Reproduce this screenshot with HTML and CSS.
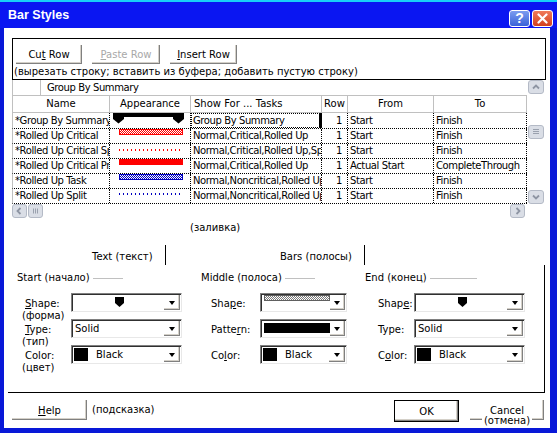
FILE: index.html
```html
<!DOCTYPE html>
<html>
<head>
<meta charset="utf-8">
<link rel="stylesheet" href="styles.css">
</head>
<body>
<div class="window">
  <div class="titlebar">
    <span class="title">Bar Styles</span>
    <span class="tbtn help">?</span>
    <span class="tbtn close"><svg width="11" height="11" viewBox="0 0 11 11"><path d="M1.5 1.5L9.5 9.5M9.5 1.5L1.5 9.5" stroke="#fff" stroke-width="2.2" stroke-linecap="round"/></svg></span>
  </div>
  <div class="client">
    <div class="grp1">
      <div class="btnrow">
        <div class="btn w66"><span>Cu<u>t</u> Row</span></div>
        <div class="btn w68 dis"><span><u>P</u>aste Row</span></div>
        <div class="btn w67"><span><u>I</u>nsert Row</span></div>
      </div>
      <div class="hint">(вырезать строку; вставить из буфера; добавить пустую строку)</div>
    </div>

    <div class="tablearea">
      <div class="grid">
        <div class="toprow"><div class="corner"></div><div class="toptext">Group By Summary</div></div>
        <div class="cols hdr">
          <div class="c">Name</div><div class="c">Appearance</div><div class="c l">Show For ... Tasks</div><div class="c">Row</div><div class="c">From</div><div class="c">To</div>
        </div>
        <div class="cols row r1">
          <div class="c">*Group By Summary</div>
          <div class="c app"><svg class="gbar" width="71" height="11" viewBox="0 0 71 11"><rect x="0" y="0" width="71" height="4"/><polygon points="0,0 11,0 11,6 5.5,10.5 0,6"/><polygon points="60,0 71,0 71,6 65.5,10.5 60,6"/></svg></div>
          <div class="c focus">Group By Summary</div>
          <div class="c num">1</div>
          <div class="c">Start</div>
          <div class="c">Finish</div>
        </div>
        <div class="cols row">
          <div class="c">*Rolled Up Critical</div>
          <div class="c app"><div class="bar hatch-red"></div></div>
          <div class="c">Normal,Critical,Rolled Up</div>
          <div class="c num">1</div>
          <div class="c">Start</div>
          <div class="c">Finish</div>
        </div>
        <div class="cols row">
          <div class="c">*Rolled Up Critical Split</div>
          <div class="c app"><div class="bar dots-red"></div></div>
          <div class="c">Normal,Critical,Rolled Up,Split</div>
          <div class="c num">1</div>
          <div class="c">Start</div>
          <div class="c">Finish</div>
        </div>
        <div class="cols row">
          <div class="c">*Rolled Up Critical Progress</div>
          <div class="c app"><div class="bar solid-red"></div></div>
          <div class="c">Normal,Critical,Rolled Up</div>
          <div class="c num">1</div>
          <div class="c">Actual Start</div>
          <div class="c">CompleteThrough</div>
        </div>
        <div class="cols row">
          <div class="c">*Rolled Up Task</div>
          <div class="c app"><div class="bar hatch-blue"></div></div>
          <div class="c">Normal,Noncritical,Rolled Up</div>
          <div class="c num">1</div>
          <div class="c">Start</div>
          <div class="c">Finish</div>
        </div>
        <div class="cols row">
          <div class="c">*Rolled Up Split</div>
          <div class="c app"><div class="bar dots-blue"></div></div>
          <div class="c">Normal,Noncritical,Rolled Up,Split</div>
          <div class="c num">1</div>
          <div class="c">Start</div>
          <div class="c">Finish</div>
        </div>
        <div class="hscroll">
          <svg class="sb" width="15" height="14" viewBox="0 0 15 14"><rect x=".5" y=".5" width="14" height="13" rx="2.5" class="sbbg"/><path d="M8.5 4L5.5 7L8.5 10" class="chev"/></svg>
          <svg class="sb hthumb" width="15" height="14" viewBox="0 0 15 14"><rect x=".5" y=".5" width="14" height="13" rx="2.5" class="sbbg"/><path d="M5.5 4.5v5M7.5 4.5v5M9.5 4.5v5" class="grip"/></svg>
          <div class="spacer"></div>
          <svg class="sb hright" width="15" height="14" viewBox="0 0 15 14"><rect x=".5" y=".5" width="14" height="13" rx="2.5" class="sbbg"/><path d="M6.5 4L9.5 7L6.5 10" class="chev"/></svg>
        </div>
      </div>
      <div class="vscroll">
        <svg class="sb" width="16" height="14" viewBox="0 0 16 14"><rect x=".5" y=".5" width="15" height="13" rx="2.5" class="sbbg"/><path d="M5 8.5L8 5.5L11 8.5" class="chev"/></svg>
        <svg class="sb vthumb" width="16" height="14" viewBox="0 0 16 14"><rect x=".5" y=".5" width="15" height="13" rx="2.5" class="sbbg"/><path d="M5 4.5h6M5 6.5h6M5 8.5h6" class="grip"/></svg>
        <svg class="sb vdown" width="16" height="14" viewBox="0 0 16 14"><rect x=".5" y=".5" width="15" height="13" rx="2.5" class="sbbg"/><path d="M5 5.5L8 8.5L11 5.5" class="chev"/></svg>
      </div>
    </div>

    <div class="fill">(заливка)</div>

    <div class="tabs">
      <div class="tab t1">Text (текст)</div>
      <div class="tab t2">Bars (полосы)</div>
    </div>

    <div class="panel">
      <div class="grp gs">
        <div class="ghead"><span>Start (начало)</span><i class="rule w30"></i></div>
        <div class="frow first">
          <div class="lbl"><span><u>S</u>hape:</span><span class="sub">(форма)</span></div>
          <div class="combo w111"><div class="val center"><svg width="9" height="10" viewBox="0 0 9 10"><polygon points="0,0 9,0 9,6 4.5,10 0,6"/></svg></div><div class="dd"><i class="arr"></i></div></div>
        </div>
        <div class="frow">
          <div class="lbl"><span><u>T</u>ype:</span><span class="sub">(тип)</span></div>
          <div class="combo w111"><div class="val">Solid</div><div class="dd"><i class="arr"></i></div></div>
        </div>
        <div class="frow">
          <div class="lbl"><span>Color:</span><span class="sub">(цвет)</span></div>
          <div class="combo w111"><div class="val sw"><i class="swatch"></i><span class="cname">Black</span></div><div class="dd"><i class="arr"></i></div></div>
        </div>
      </div>

      <div class="grp gm">
        <div class="ghead"><span>Middle (полоса)</span><i class="rule w30"></i></div>
        <div class="frow first">
          <div class="lbl"><span>Sha<u>p</u>e:</span></div>
          <div class="combo w87"><div class="val top"><i class="pbar"></i></div><div class="dd"><i class="arr"></i></div></div>
        </div>
        <div class="frow">
          <div class="lbl"><span>Patte<u>r</u>n:</span></div>
          <div class="combo w87"><div class="val top"><i class="blackbar"></i></div><div class="dd"><i class="arr"></i></div></div>
        </div>
        <div class="frow">
          <div class="lbl"><span>Co<u>l</u>or:</span></div>
          <div class="combo w87"><div class="val sw"><i class="swatch"></i><span class="cname">Black</span></div><div class="dd"><i class="arr"></i></div></div>
        </div>
      </div>

      <div class="grp ge">
        <div class="ghead"><span>End (конец)</span><i class="rule w47"></i></div>
        <div class="frow first">
          <div class="lbl"><span>Shap<u>e</u>:</span></div>
          <div class="combo w111"><div class="val center"><svg width="9" height="10" viewBox="0 0 9 10"><polygon points="0,0 9,0 9,6 4.5,10 0,6"/></svg></div><div class="dd"><i class="arr"></i></div></div>
        </div>
        <div class="frow">
          <div class="lbl"><span>Type:</span></div>
          <div class="combo w111"><div class="val">Solid</div><div class="dd"><i class="arr"></i></div></div>
        </div>
        <div class="frow">
          <div class="lbl"><span>C<u>o</u>lor:</span></div>
          <div class="combo w111"><div class="val sw"><i class="swatch"></i><span class="cname">Black</span></div><div class="dd"><i class="arr"></i></div></div>
        </div>
      </div>
    </div>

    <div class="footer">
      <div class="btn helpb"><span><u>H</u>elp</span></div>
      <div class="fhint">(подсказка)</div>
      <div class="btn ok"><span>OK</span></div>
      <div class="btn cancel"><span>Cancel</span><span class="sub2">(отмена)</span></div>
    </div>
  </div>
</div>
</body>
</html>
```

FILE: styles.css
```css
* { box-sizing: border-box; }
html, body { margin: 0; padding: 0; }
body {
  width: 557px; height: 433px; overflow: hidden;
  background: #0818d8;
  font-family: "DejaVu Sans", sans-serif;
  font-size: 10px; color: #000;
}
u { text-decoration: underline; text-underline-offset: 1px; }

.window {
  width: 557px; height: 433px;
  background: #0818d8;
  border-top: 2px solid #18d0f8;
  display: flex; flex-direction: column;
}
.titlebar {
  height: 26px; background: #0a16f2;
  display: flex; align-items: flex-start;
  padding: 0 4px 0 8px;
}
.title {
  flex: 1;
  font-family: "Liberation Sans", sans-serif;
  font-weight: bold; font-size: 12.5px; line-height: 26px;
  color: #fff;
}
.tbtn {
  width: 21px; height: 17px; margin-top: 8px;
  border: 1px solid #fff; border-radius: 3px;
  display: flex; align-items: center; justify-content: center;
}
.tbtn.help {
  background: linear-gradient(#7c9cf0, #3a62d8);
  color: #fff; font-family: "Liberation Sans", sans-serif;
  font-weight: bold; font-size: 14px; line-height: 15px;
}
.tbtn.close {
  margin-left: 2px;
  background: linear-gradient(#f07a5a, #d2401f);
}

.client {
  background: #fff;
  margin: 0 7px 0 4px;
  height: 400px;
  display: flex; flex-direction: column;
}

/* top group */
.grp1 {
  margin: 10px 4px 0 8px;
  height: 42px;
  border: 1px solid #000;
}
.btnrow { display: flex; gap: 10px; padding: 6px 0 0 3px; }
.btn {
  display: flex; align-items: center; justify-content: center;
  height: 19px; background: #fff; white-space: nowrap;
  box-shadow: inset -1px -1px 0 #808080, inset -2px -2px 0 #d4d0c8;
}
.w66 { width: 66px; } .w67 { width: 67px; } .w68 { width: 68px; }
.btn.dis { color: #a8a8a8; }
.hint { margin-top: 1px; padding-left: 1px; line-height: 13px; white-space: nowrap; }

/* table */
.tablearea { margin-left: 8px; width: 533px; height: 138px; display: flex; }
.grid { width: 515px; }
.toprow {
  height: 16px; display: flex;
  border-left: 1px solid #c0c0c0; border-bottom: 1px solid #c0c0c0;
}
.corner { width: 28px; border-right: 1px solid #c0c0c0; }
.toptext { padding-left: 6px; line-height: 15px; letter-spacing: -0.4px; }
.cols {
  display: grid;
  grid-template-columns: 97px 81px 131px 26px 86px 93px;
  border-left: 1px solid #c0c0c0;
}
.c { overflow: hidden; white-space: nowrap; }
.hdr { height: 17px; border-bottom: 1px solid #c0c0c0; }
.hdr .c { border-right: 1px solid #c0c0c0; text-align: center; line-height: 16px; }
.hdr .c.l { text-align: left; padding-left: 3px; }
.row { height: 15px; border-bottom: 1px dotted #000; }
.row.r1 { height: 16px; }
.row .c { border-right: 1px dotted #000; line-height: 14px; padding-left: 2px; letter-spacing: -0.4px; }
.row.r1 .c { line-height: 15px; }
.row .c.num { text-align: right; padding-right: 5px; }
.row .c.app { padding-left: 9px; }
.row.r1 .c.app { padding-left: 3px; }
.gbar { display: block; fill: #000; }
.row .c.focus { outline: 1px dotted #000; outline-offset: -1px; border-right: 3px solid #000; }

.bar { width: 64px; }
.hatch-red {
  height: 6px; border: 1px solid #f00;
  background: repeating-conic-gradient(#f00 0 25%, #fff 0 50%) 0 0 / 2px 2px;
}
.dots-red {
  height: 2px; margin-top: 5px;
  background: repeating-linear-gradient(90deg, #f00 0 1px, transparent 1px 4px);
}
.solid-red { height: 6px; background: #f00; }
.hatch-blue {
  height: 6px; border: 1px solid #0000c0;
  background: repeating-conic-gradient(#0000c0 0 25%, #fff 0 50%) 0 0 / 2px 2px;
}
.dots-blue {
  height: 2px; margin-top: 4px;
  background: repeating-linear-gradient(90deg, #0000c0 0 1px, transparent 1px 4px);
}

.hscroll { display: flex; height: 14px; }
.spacer { flex: 1; }
.sb { display: block; }
.hthumb { margin-left: 1px; }
.hright { margin-right: 2px; }
.sbbg { fill: #dadee6; stroke: #b4bac6; }
.chev { fill: none; stroke: #8e95a3; stroke-width: 1.8; }
.grip { fill: none; stroke: #9aa1ae; stroke-width: 1; }
.vscroll { width: 18px; padding-left: 1px; display: flex; flex-direction: column; }
.vthumb { margin-top: 31px; }
.vdown { margin-top: 51px; }

.fill { margin: 3px 0 0 186px; line-height: 13px; }

/* tabs */
.tabs { display: flex; margin-top: 11px; height: 20px; }
.tab { height: 20px; border-right: 1px solid #000; padding-top: 5px; line-height: 13px; white-space: nowrap; }
.t1 { margin-left: 88px; width: 74px; }
.t2 { width: 199px; padding-left: 114px; }

/* lower panel */
.panel {
  margin-left: 4px; width: 537px; height: 128px;
  border-right: 1px solid #000; border-bottom: 1px solid #000;
  display: flex;
}
.grp { padding-left: 9px; }
.gs { width: 184px; }
.gm { width: 164px; }
.ge { flex: 1; }
.ghead { display: flex; align-items: center; margin-top: 6px; line-height: 13px; white-space: nowrap; }
.rule { display: block; height: 1px; background: #c0c0c0; margin-left: 3px; margin-top: 1px; }
.w30 { width: 30px; } .w47 { width: 47px; }

.frow { display: flex; height: 19px; margin-top: 7px; }
.frow.first { margin-top: 9px; }
.lbl {
  display: flex; flex-direction: column;
  padding-top: 5px; line-height: 12px; white-space: nowrap;
}
.gs .lbl { width: 54px; padding-left: 8px; }
.gs .lbl .sub { margin-left: -3px; }
.gm .lbl { width: 59px; padding-left: 10px; }
.ge .lbl { width: 49px; padding-left: 13px; }

.combo {
  display: flex; align-items: center; height: 19px;
  border-top: 1px solid #808080; border-left: 1px solid #808080;
  border-right: 1px solid #e8e8e8; border-bottom: 1px solid #e8e8e8;
  box-shadow: inset 1px 1px 0 #303030;
}
.w111 { width: 111px; } .w87 { width: 87px; }
.val { flex: 1; height: 100%; display: flex; align-items: center; padding-left: 3px; white-space: nowrap; }
.val.center { justify-content: center; }
.val.center svg { display: block; fill: #000; margin-top: -1px; }
.val.top { align-items: flex-start; padding-left: 3px; }
.val.sw { padding-left: 2px; }
.swatch { display: block; width: 14px; height: 13px; background: #000; }
.cname { margin-left: 8px; }
.pbar {
  display: block; width: 66px; height: 6px; margin-top: 1px;
  border: 1px solid #606060;
  background: repeating-conic-gradient(#7a7a7a 0 25%, #fff 0 50%) 0 0 / 2px 2px;
}
.blackbar { display: block; width: 66px; height: 10px; margin-top: 3px; background: #000; }
.dd {
  width: 16px; height: 15px; margin-right: 1px;
  display: flex; align-items: center; justify-content: center;
  box-shadow: inset -1px -1px 0 #808080, inset -2px -2px 0 #d4d0c8;
}
.arr {
  display: block; width: 0; height: 0;
  border-left: 3.5px solid transparent; border-right: 3.5px solid transparent;
  border-top: 4px solid #000; margin: 1px 1px 0 0;
}

/* footer */
.footer { display: flex; align-items: flex-start; margin-top: 7px; }
.helpb { margin-left: 8px; width: 75px; height: 20px; }
.fhint { margin-left: 5px; line-height: 20px; }
.ok {
  margin-left: auto; width: 65px; height: 22px;
  border: 1px solid #000;
}
.cancel {
  margin-left: 11px; margin-right: 6px; width: 74px; height: 20px;
  flex-direction: column; justify-content: flex-start;
  padding-top: 6px; line-height: 10px;
}
.sub2 { background: #fff; padding: 0 2px; }
```
